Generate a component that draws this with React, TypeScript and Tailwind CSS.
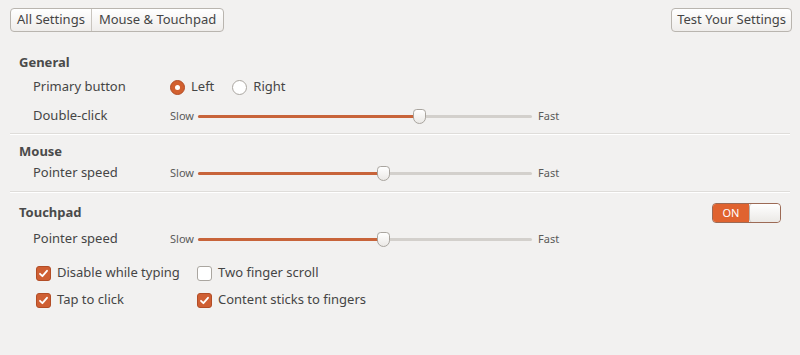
import React from "react";

const font = { fontFamily: '"Noto Sans", "Open Sans", sans-serif' };

function Slider({ value }: { value: number }) {
  return (
    <div className="flex items-center h-full">
      <span className="text-[11px] text-[#5a5a5a] w-[28px]">Slow</span>
      <div className="relative w-[334px] h-[16px] flex items-center">
        <div className="w-full h-[3px] rounded-full bg-[#d3d0cc]" />
        <div
          className="absolute left-0 h-[3px] rounded-full bg-[#c8643a]"
          style={{ width: `${value * 100}%` }}
        />
        <div
          className="absolute top-[1px] w-[13px] h-[15px] -ml-[6px] rounded-t-[4px] rounded-b-[7px] border border-[#a9a59f] bg-gradient-to-b from-white to-[#ebe9e6]"
          style={{ left: `${value * 100}%` }}
        />
      </div>
      <span className="text-[11px] text-[#5a5a5a] ml-[6px]">Fast</span>
    </div>
  );
}

function Check({ on, label }: { on: boolean; label: string }) {
  return (
    <div className="flex items-center gap-[6px]">
      {on ? (
        <span className="w-[15px] h-[15px] rounded-[3px] bg-[#cf5f33] border border-[#b24d26] flex items-center justify-center">
          <svg width="11" height="11" viewBox="0 0 11 11">
            <path d="M2 5.8 L4.4 8.2 L9 2.8" fill="none" stroke="white" strokeWidth="1.8" strokeLinecap="round" strokeLinejoin="round" />
          </svg>
        </span>
      ) : (
        <span className="w-[15px] h-[15px] rounded-[3px] bg-white border border-[#aaa6a0]" />
      )}
      <span>{label}</span>
    </div>
  );
}

function Radio({ on, label }: { on: boolean; label: string }) {
  return (
    <div className="flex items-center gap-[6px]">
      {on ? (
        <span className="w-[15px] h-[15px] rounded-full bg-[#d2602f] border border-[#b24d26] flex items-center justify-center">
          <span className="w-[5px] h-[5px] rounded-full bg-white" />
        </span>
      ) : (
        <span className="w-[15px] h-[15px] rounded-full bg-white border border-[#aaa6a0]" />
      )}
      <span>{label}</span>
    </div>
  );
}

function Row({ label, h, children }: { label: string; h: string; children: React.ReactNode }) {
  return (
    <div className={`flex items-center ${h}`}>
      <span className="w-[160px] pl-[23px]">{label}</span>
      {children}
    </div>
  );
}

export default function App() {
  return (
    <div className="w-[800px] h-[355px] bg-[#f2f1f0] text-[13px] text-[#454545] overflow-hidden" style={font}>
      <div className="flex justify-between px-[8px] pt-[8px]">
        <div className="flex h-[24px] ml-[2px] rounded-[4px] border border-[#b9b5af] bg-gradient-to-b from-white to-[#efedeb] overflow-hidden">
          <span className="px-[6px] flex items-center border-r border-[#c9c5bf]">All Settings</span>
          <span className="px-[7px] flex items-center">Mouse &amp; Touchpad</span>
        </div>
        <div className="flex items-center h-[24px] px-[5px] rounded-[4px] border border-[#b9b5af] bg-gradient-to-b from-white to-[#efedeb]">
          Test Your Settings
        </div>
      </div>

      <div className="mx-[10px] mt-[21px]">
        <div className="border-b border-[#dfddda] shadow-[0_1px_0_white] pb-[2px]">
          <div className="h-[20px] flex items-center pl-[9px] font-bold text-[#4a4a4a]">General</div>
          <Row label="Primary button" h="h-[28px]">
            <div className="flex items-center gap-[18px]">
              <Radio on label="Left" />
              <Radio on={false} label="Right" />
            </div>
          </Row>
          <Row label="Double-click" h="h-[30px]">
            <Slider value={0.662} />
          </Row>
        </div>

        <div className="border-b border-[#dfddda] shadow-[0_1px_0_white] pt-[8px] pb-[7px]">
          <div className="h-[20px] flex items-center pl-[9px] font-bold text-[#4a4a4a]">Mouse</div>
          <Row label="Pointer speed" h="h-[22px]">
            <Slider value={0.554} />
          </Row>
        </div>

        <div className="pt-[11px]">
          <div className="h-[20px] flex items-center justify-between pl-[9px]">
            <span className="font-bold text-[#4a4a4a]">Touchpad</span>
            <div className="flex h-[20px] w-[69px] mr-[9px] rounded-[4px] border border-[#9c6a55] overflow-hidden">
              <span className="w-[36px] bg-[#e0632f] text-white text-[11px] flex items-center justify-center">ON</span>
              <span className="flex-1 bg-gradient-to-b from-white to-[#ebe9e6] rounded-[3px] border-l border-[#b7b3ad]" />
            </div>
          </div>
          <Row label="Pointer speed" h="h-[32px]">
            <Slider value={0.554} />
          </Row>
          <div className="pl-[26px] mt-[4px]">
            <div className="flex items-center h-[28px]">
              <div className="w-[161px]"><Check on label="Disable while typing" /></div>
              <Check on={false} label="Two finger scroll" />
            </div>
            <div className="flex items-center h-[26px]">
              <div className="w-[161px]"><Check on label="Tap to click" /></div>
              <Check on label="Content sticks to fingers" />
            </div>
          </div>
        </div>
      </div>
    </div>
  );
}
